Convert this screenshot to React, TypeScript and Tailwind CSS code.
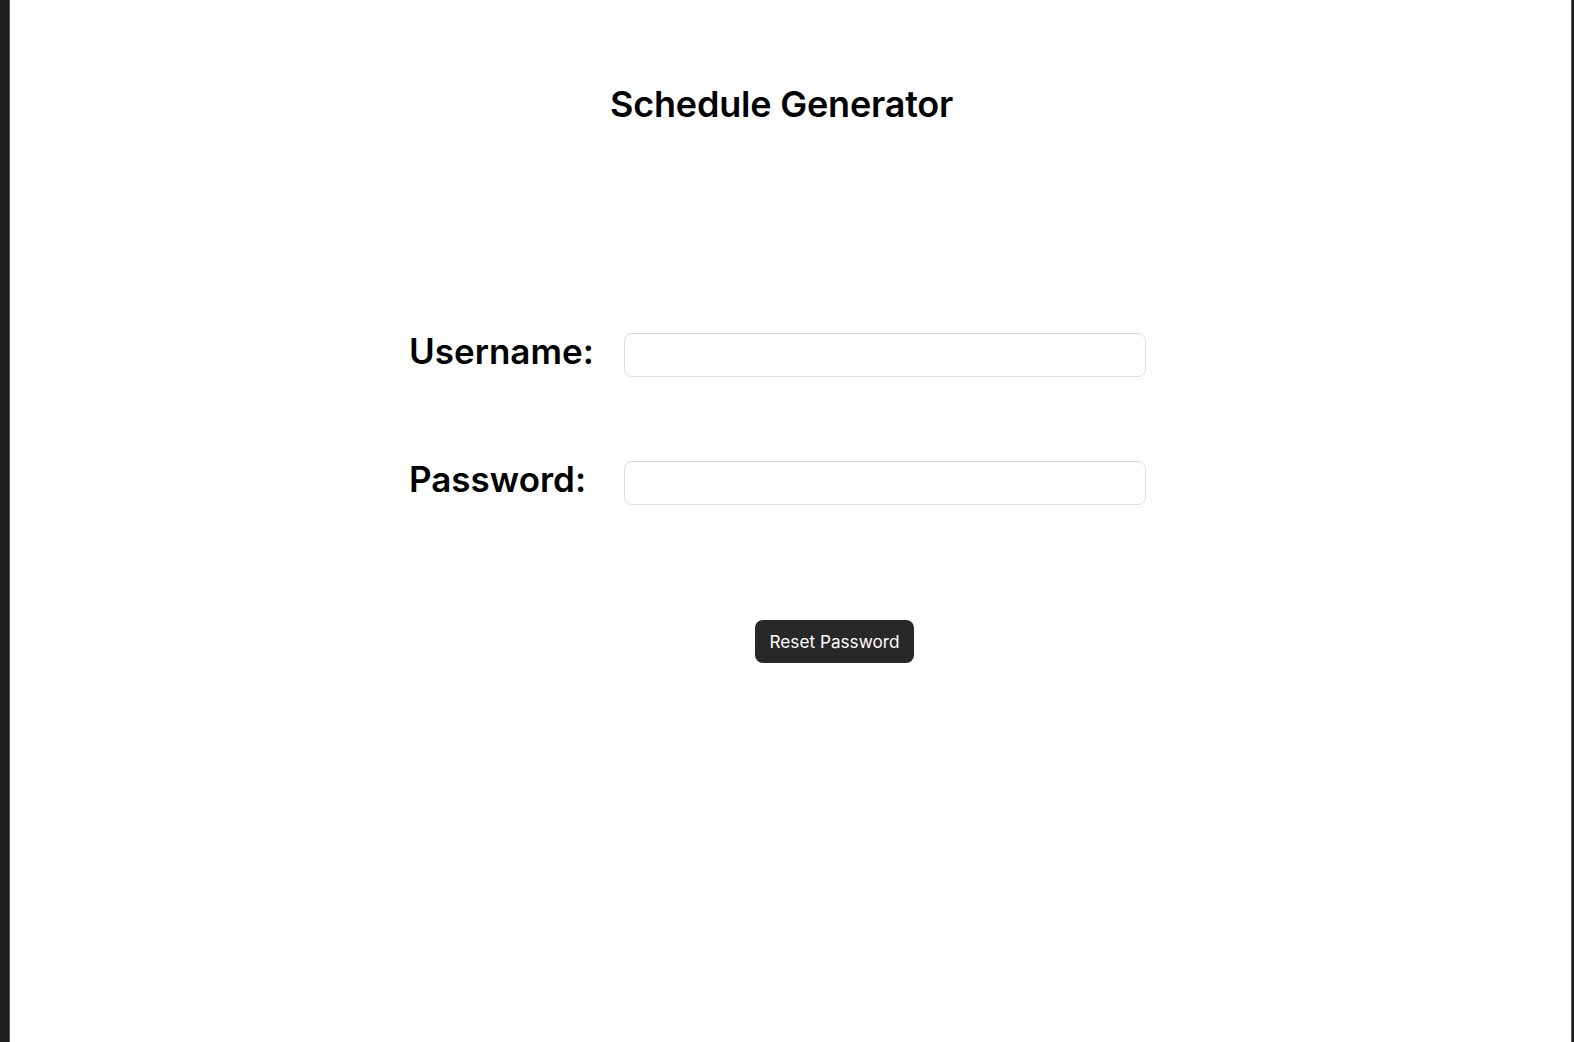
import React from "react";

export default function App() {
  return (
    <div
      className="flex h-[1042px] w-full overflow-hidden bg-white text-black"
      style={{ fontFamily: "Inter, 'Noto Sans', sans-serif" }}
    >
      <div className="w-[9px] shrink-0 bg-[#1e1e1e]" />
      <div className="w-px shrink-0 bg-[#5a5a5a]" />
      <main className="flex flex-1 flex-col">
        <h1 className="ml-[600px] mt-[82px] text-[36px] font-semibold leading-[44px] tracking-[-0.2px]">
          Schedule Generator
        </h1>
        <div className="ml-[399px] mt-[207px] flex flex-col gap-[84px]">
          <div className="flex items-start">
            <label className="-mt-[4px] w-[215px] text-[35px] font-semibold leading-[44px]">
              Username:
            </label>
            <input
              type="text"
              className="h-[44px] w-[522px] rounded-lg border border-[#dcdcdc] bg-white px-3 outline-none"
            />
          </div>
          <div className="flex items-start">
            <label className="-mt-[4px] w-[215px] text-[35px] font-semibold leading-[44px]">
              Password:
            </label>
            <input
              type="password"
              className="h-[44px] w-[522px] rounded-lg border border-[#dcdcdc] bg-white px-3 outline-none"
            />
          </div>
        </div>
        <div className="ml-[745px] mt-[115px]">
          <button className="h-[43px] w-[159px] rounded-lg bg-[#282828] text-[17.2px] text-white">
            Reset Password
          </button>
        </div>
      </main>
      <div className="w-px shrink-0 bg-[#5a5a5a]" />
      <div className="w-[2px] shrink-0 bg-[#1e1e1e]" />
    </div>
  );
}
